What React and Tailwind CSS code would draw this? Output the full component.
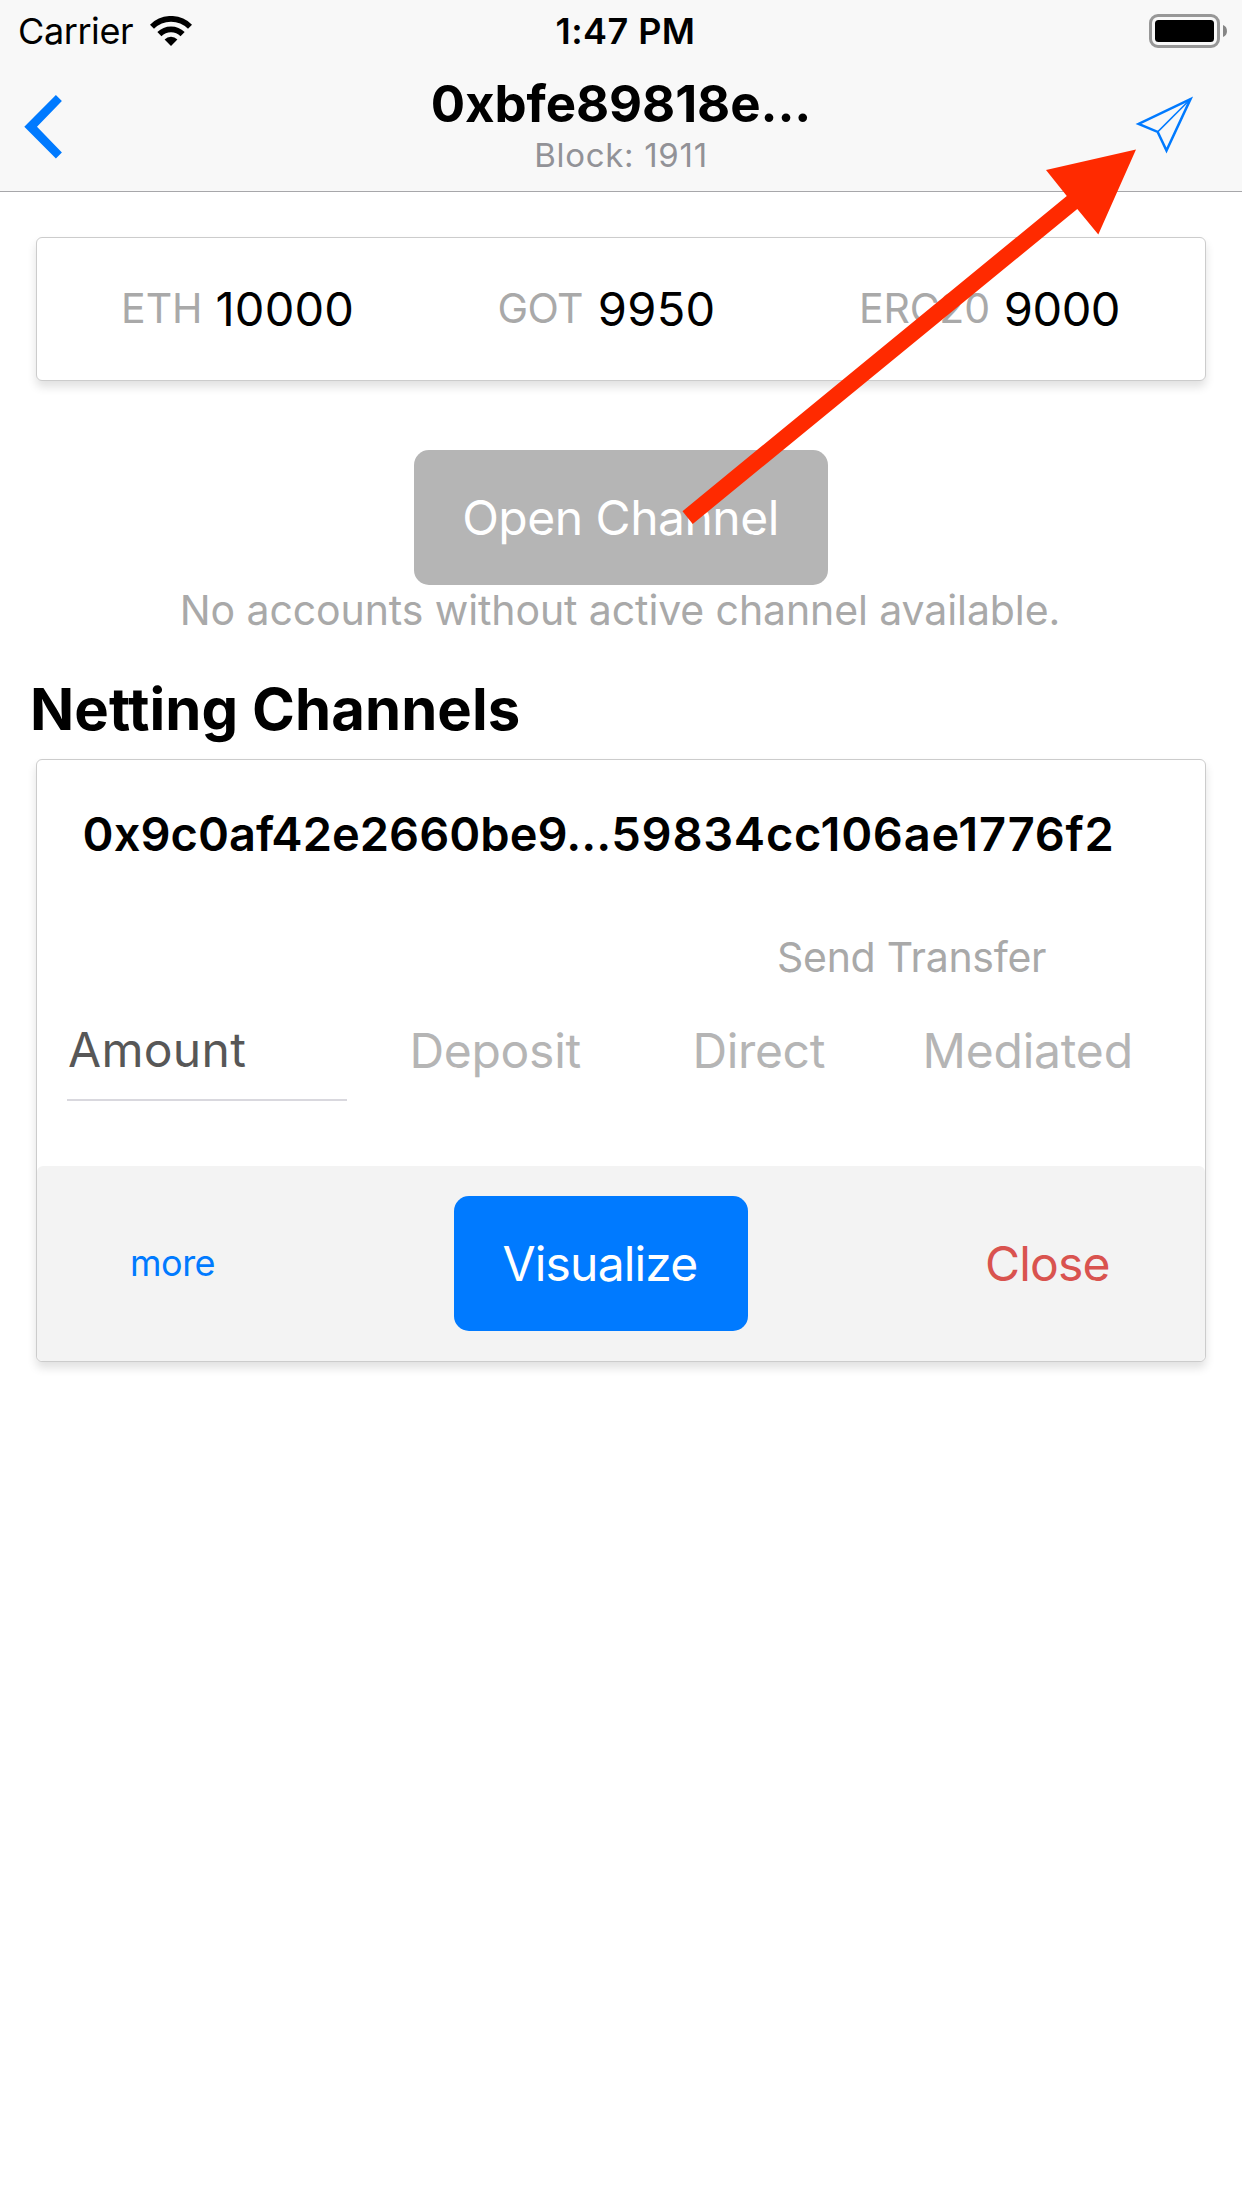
import React from "react";

function WifiIcon() {
  return (
    <svg className="ml-[17px] block" width="42" height="30" viewBox="0 0 42 30" fill="none">
      <path d="M1.98 10.68A26.9 26.9 0 0 1 40.02 10.68" stroke="#000" strokeWidth="5.7" />
      <path d="M9.4 18.1A16.4 16.4 0 0 1 32.6 18.1" stroke="#000" strokeWidth="5.8" />
      <path d="M21 29.9L14.6 23.4A9.1 9.1 0 0 1 27.4 23.4Z" fill="#000" />
    </svg>
  );
}

function BatteryIcon() {
  return (
    <svg className="-mt-px block" width="79" height="34" viewBox="0 0 79 34">
      <rect x="1.5" y="1.5" width="68" height="31" rx="7.5" fill="none" stroke="#979797" strokeWidth="3" />
      <rect x="6" y="6" width="59" height="22" rx="3.5" fill="#000" />
      <path d="M74 11C79.3 12.5 79.3 21.5 74 23Z" fill="#868686" />
    </svg>
  );
}

function BackIcon() {
  return (
    <svg className="block" width="38" height="64" viewBox="0 0 38 64">
      <path d="M31.9 0L37.9 6L13 31.7L37.9 57.5L31.9 63.5L0.3 31.7Z" fill="#007aff" />
    </svg>
  );
}

function SendIcon() {
  return (
    <svg className="block overflow-visible" width="60" height="60" viewBox="0 0 60 60" fill="none">
      <path
        d="M54.5 4.1L2.6 28.9L21.7 36.9L30.5 55.6Z"
        stroke="#007aff"
        strokeWidth="2.5"
        strokeLinejoin="miter"
      />
      <path d="M21.7 36.9L54.3 4.3" stroke="#007aff" strokeWidth="1.5" />
    </svg>
  );
}

function Header() {
  return (
    <header className="h-[192px] border-b border-[#a7a7aa] bg-[#f8f8f8]">
      <div className="grid h-[60px] grid-cols-3 items-center">
        <div className="flex items-center pl-[18px]">
          <span className="text-[36px] leading-[62px] tracking-[-0.41px]">Carrier</span>
          <WifiIcon />
        </div>
        <div className="pl-[9px] text-center text-[36px] font-semibold leading-[62px] tracking-[0.43px]">1:47 PM</div>
        <div className="flex justify-end pr-[14px]">
          <BatteryIcon />
        </div>
      </div>
      <div className="grid h-[131px] grid-cols-[1fr_auto_1fr] items-start">
        <button className="ml-6 mt-[35px] w-[38px]">
          <BackIcon />
        </button>
        <div className="flex flex-col items-center pt-[12px]">
          <h1 className="text-[51px] font-bold leading-[64px] tracking-[-0.09px]">0xbfe89818e...</h1>
          <p className="text-[33px] leading-[38px] tracking-[0.7px] text-[#929297]">Block: 1911</p>
        </div>
        <button className="ml-auto mr-[46px] mt-[35px]">
          <SendIcon />
        </button>
      </div>
    </header>
  );
}

const card = "mx-9 rounded-[6px] border border-[#cccccc] bg-white shadow-[0_6px_10px_rgba(0,0,0,0.12)]";

function Balance({ name, value, className, nameClass, valueClass }) {
  return (
    <div className={`flex items-center ${className}`}>
      <span className={`pb-[2px] text-[41px] leading-[56px] text-[#a9a9a9] ${nameClass}`}>{name}</span>
      <span className={`text-[47px] leading-[58px] ${valueClass}`}>{value}</span>
    </div>
  );
}

export default function App() {
  return (
    <div className="relative h-[2208px] w-[1242px] overflow-hidden whitespace-nowrap bg-white font-['Inter',sans-serif] text-black">
      <Header />

      <main className="pt-[45px]">
        <section className={`${card} flex h-[144px] items-center justify-between pl-[84px] pr-[85px]`}>
          <Balance name="ETH" value="10000" className="gap-[13px]" nameClass="" valueClass="tracking-[0.15px]" />
          <Balance name="GOT" value="9950" className="gap-[15px]" nameClass="tracking-[-0.66px]" valueClass="tracking-[0.31px]" />
          <Balance name="ERC20" value="9000" className="gap-[14px]" nameClass="tracking-[-0.22px]" valueClass="tracking-[-0.48px]" />
        </section>

        <div className="mt-[69px] flex flex-col items-center">
          <button className="h-[135px] w-[414px] rounded-[15px] bg-[#b5b5b5] pr-px text-[48px] tracking-[-0.5px] text-white">
            Open Channel
          </button>
          <p className="pr-[2px] text-[41px] leading-[50px] tracking-[-0.1px] text-[#a9a9a9]">
            No accounts without active channel available.
          </p>
        </div>

        <h2 className="ml-[30px] mt-[39px] text-[58px] font-bold leading-[70px] tracking-[0.08px]">Netting Channels</h2>

        <section className={`${card} mt-[15px]`}>
          <div className="flex h-[406px] flex-col pt-11">
            <h3 className="ml-[45.6px] text-[47px] font-semibold leading-[60px]">
              <span className="tracking-[0.03px]">0x9c0af42e2660be9...</span>
              <span className="tracking-[0.73px]">59834cc106ae1776f2</span>
            </h3>
            <p className="ml-[740px] mt-[68px] text-[41px] leading-[50px] tracking-[-0.28px] text-[#a9a9a9]">Send Transfer</p>
            <div className="mt-[18px] flex h-[101px] pl-[30px] text-[48px] leading-[101px] text-[#b5b5b5]">
              <div className="w-[280px] border-b-2 border-[#d9d8de] pl-px leading-[99px] tracking-[0.3px] text-[#575757]">
                Amount
              </div>
              <span className="ml-[62.5px] w-[283px] tracking-[-0.3px]">Deposit</span>
              <span className="w-[230px] tracking-[-0.35px]">Direct</span>
              <span className="tracking-[-0.2px]">Mediated</span>
            </div>
          </div>
          <div className="flex h-[195px] items-center rounded-[6px] bg-[#f3f3f3]">
            <button className="ml-[93px] w-[324px] pb-px text-left text-[36px] tracking-[-0.49px] text-[#007aff]">more</button>
            <button className="h-[135px] w-[294px] rounded-[15px] bg-[#007aff] pr-[2px] text-[48px] tracking-[-0.84px] text-white">
              Visualize
            </button>
            <button className="ml-[237px] text-[48px] tracking-[-0.8px] text-[#d9534f]">Close</button>
          </div>
        </section>
      </main>

      <svg className="pointer-events-none absolute left-0 top-0" width="1242" height="600" viewBox="0 0 1242 600">
        <path d="M1136 149.5L1098.3 234.4L1077.3 209L692.7 524L682.5 511.2L1066.8 196L1046 170Z" fill="#ff2a00" />
      </svg>
    </div>
  );
}
